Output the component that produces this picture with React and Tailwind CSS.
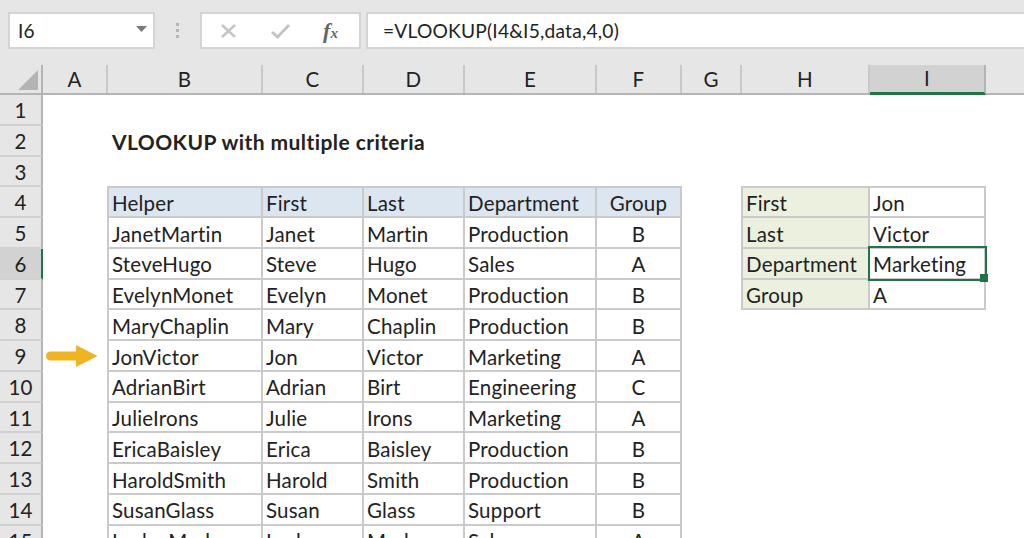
const cols = [
  { l: "A", w: "w-[65px]" },
  { l: "B", w: "w-[155px]" },
  { l: "C", w: "w-[101px]" },
  { l: "D", w: "w-[101px]" },
  { l: "E", w: "w-[132px]" },
  { l: "F", w: "w-[85px]" },
  { l: "G", w: "w-[60px]" },
  { l: "H", w: "w-[128px]" },
  { l: "I", w: "w-[116px]" },
];

const people = [
  ["JanetMartin", "Janet", "Martin", "Production", "B"],
  ["SteveHugo", "Steve", "Hugo", "Sales", "A"],
  ["EvelynMonet", "Evelyn", "Monet", "Production", "B"],
  ["MaryChaplin", "Mary", "Chaplin", "Production", "B"],
  ["JonVictor", "Jon", "Victor", "Marketing", "A"],
  ["AdrianBirt", "Adrian", "Birt", "Engineering", "C"],
  ["JulieIrons", "Julie", "Irons", "Marketing", "A"],
  ["EricaBaisley", "Erica", "Baisley", "Production", "B"],
  ["HaroldSmith", "Harold", "Smith", "Production", "B"],
  ["SusanGlass", "Susan", "Glass", "Support", "B"],
  ["LeslyeMarks", "Leslye", "Marks", "Sales", "A"],
];
const side = { 4: ["First", "Jon"], 5: ["Last", "Victor"], 6: ["Department", "Marketing"], 7: ["Group", "A"] };

function Cell({ w, className = "", children }) {
  return <div className={`${w} shrink-0 h-full flex items-center pt-[3px] ${className}`}>{children}</div>;
}

function Row({ n }) {
  const isHeader = n === 4;
  const p = n >= 5 ? people[n - 5] : null;
  const isTable = isHeader || p;
  const labels = isHeader ? ["Helper", "First", "Last", "Department", "Group"] : p;
  const s = side[n];
  const top = isHeader ? "border-t" : "";
  const bt = `border-r-2 border-b-2 border-[#cacaca] ${top}`;
  const bg = isHeader ? "bg-[#dce6f1]" : "bg-white";
  return (
    <div className="flex h-[30.75px]">
      <div className={`w-[43px] shrink-0 h-full flex items-center justify-center pt-[2px] border-r-2 border-b-2 border-b-[#d0d0d0] text-[#222] ${n === 6 ? "bg-[#d2d2d2] border-r-[#217346]" : "bg-[#e6e6e6] border-r-[#b4b4b4]"}`}>
        {n}
      </div>
      <Cell w="w-[64px]" className="!pt-0">
        {n === 9 && (
          <svg width="52" height="22" viewBox="0 0 52 22" className="ml-[3px]">
            <path d="M4.5 6.5H30V0L51.5 11L30 22V15.5H4.5A4.5 4.5 0 0 1 4.5 6.5Z" fill="#f0b323" />
          </svg>
        )}
      </Cell>
      {isTable ? (
        <>
          <Cell w="w-[156px]" className={`${bg} ${bt} border-l-2 pl-[3px]`}>{labels[0]}</Cell>
          <Cell w="w-[101px]" className={`${bg} ${bt} pl-[3px]`}>{labels[1]}</Cell>
          <Cell w="w-[101px]" className={`${bg} ${bt} pl-[3px]`}>{labels[2]}</Cell>
          <Cell w="w-[132px]" className={`${bg} ${bt} pl-[3px]`}>{labels[3]}</Cell>
          <Cell w="w-[85px]" className={`${bg} ${bt} justify-center`}>{labels[4]}</Cell>
        </>
      ) : (
        <div className={`w-[575px] shrink-0 ${n === 3 ? "border-b border-[#cacaca]" : ""}`}>
          {n === 2 && <div className="pl-[5px] h-full flex items-center font-bold text-[21px] tracking-[0.43px]">VLOOKUP with multiple criteria</div>}
        </div>
      )}
      <Cell w="w-[59px]" />
      {s ? (
        <>
          <Cell w="w-[129px]" className={`bg-[#ebf1de] ${bt} border-l-2 pl-[3px]`}>{s[0]}</Cell>
          <Cell w="w-[116px]" className={`bg-white ${bt} pl-[3px] relative`}>
            {s[1]}
            {n === 6 && (
              <>
                <div className="absolute z-10 left-[-2px] top-[-3px] w-[119px] h-[35px] border-2 border-[#217346]" />
                <div className="absolute z-10 right-[-4px] bottom-[-4px] w-[8px] h-[8px] bg-[#217346]" />
              </>
            )}
          </Cell>
        </>
      ) : (
        n === 3 && <div className="w-[245px] shrink-0 border-b border-[#cacaca]" />
      )}
    </div>
  );
}

export default function App() {
  return (
    <div className="w-[1024px] h-[538px] overflow-hidden bg-white text-[20.5px] tracking-[0.2px] leading-none text-[#222] font-['Lato','Open_Sans',sans-serif]">
      <div className="bg-[#e6e6e6] h-[95px] flex flex-col">
        <div className="flex h-[37px] mt-3 items-stretch pl-2">
          <div className="w-[147px] bg-white border-2 border-[#d4d4d4] flex items-center justify-between pl-[8px] pr-[6px] text-[19px]">
            <span>I6</span>
            <svg width="11" height="6" viewBox="0 0 11 6" className="mb-[3px]"><path d="M0 0H11L5.5 6Z" fill="#7a7a7a" /></svg>
          </div>
          <div className="w-[45px] flex flex-col items-center justify-center gap-[3px]">
            <span className="w-[3px] h-[3px] bg-[#b4b4b4]" />
            <span className="w-[3px] h-[3px] bg-[#b4b4b4]" />
            <span className="w-[3px] h-[3px] bg-[#b4b4b4]" />
          </div>
          <div className="w-[161px] bg-white border-2 border-[#d4d4d4] flex items-center">
            <svg width="17" height="16" viewBox="0 0 17 16" className="ml-[18px]"><path d="M2 2L15 14M15 2L2 14" stroke="#c4c4c4" strokeWidth="2.4" fill="none" /></svg>
            <svg width="21" height="16" viewBox="0 0 21 16" className="ml-[33px]"><path d="M2 9L7.5 14L19 2" stroke="#c4c4c4" strokeWidth="2.8" fill="none" /></svg>
            <span className="ml-[32px] text-[#666] italic font-['Liberation_Serif',serif] font-bold text-[22px]">f<span className="text-[15px]">x</span></span>
          </div>
          <div className="ml-[5px] flex-1 bg-white border-y-2 border-l-2 border-[#d4d4d4] flex items-center pl-[15px] text-[19.2px]">=VLOOKUP(I4&amp;I5,data,4,0)</div>
        </div>
        <div className="h-[16px]" />
        <div className="flex h-[30px] border-b-2 border-[#b4b4b4]">
          <div className="w-[43px] shrink-0 border-r-2 border-[#b4b4b4] relative">
            <svg width="20" height="20" viewBox="0 0 20 20" className="absolute right-[3px] bottom-[3px]"><path d="M20 0V20H0Z" fill="#b4b4b4" /></svg>
          </div>
          {cols.map((c) => (
            <div key={c.l} className={`${c.w} shrink-0 flex items-center justify-center border-r-2 ${c.l === "I" ? "bg-[#d2d2d2] border-b-[3px] border-b-[#217346] border-r-[#b4b4b4] h-[30px]" : "border-[#c8c8c8]"}`}>
              {c.l}
            </div>
          ))}
        </div>
      </div>
      {Array.from({ length: 15 }, (_, i) => (
        <Row key={i} n={i + 1} />
      ))}
    </div>
  );
}
